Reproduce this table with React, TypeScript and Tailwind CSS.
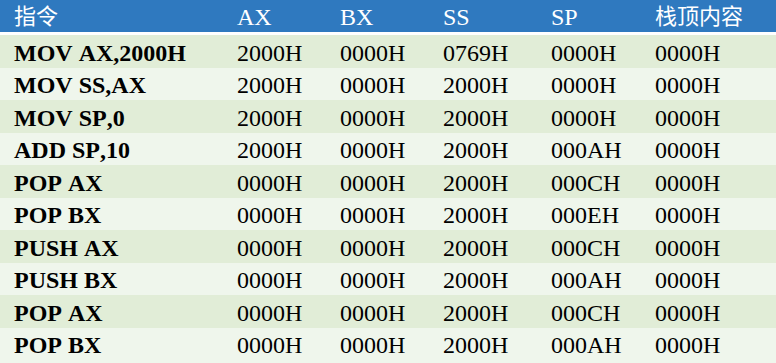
import React from "react";

const rows: string[][] = [
  ["MOV AX,2000H", "2000H", "0000H", "0769H", "0000H", "0000H"],
  ["MOV SS,AX", "2000H", "0000H", "2000H", "0000H", "0000H"],
  ["MOV SP,0", "2000H", "0000H", "2000H", "0000H", "0000H"],
  ["ADD SP,10", "2000H", "0000H", "2000H", "000AH", "0000H"],
  ["POP AX", "0000H", "0000H", "2000H", "000CH", "0000H"],
  ["POP BX", "0000H", "0000H", "2000H", "000EH", "0000H"],
  ["PUSH AX", "0000H", "0000H", "2000H", "000CH", "0000H"],
  ["PUSH BX", "0000H", "0000H", "2000H", "000AH", "0000H"],
  ["POP AX", "0000H", "0000H", "2000H", "000CH", "0000H"],
  ["POP BX", "0000H", "0000H", "2000H", "000AH", "0000H"],
];

const headers = ["指令", "AX", "BX", "SS", "SP", "栈顶内容"];
const widths = ["w-[223px]", "w-[103px]", "w-[103px]", "w-[108px]", "w-[104px]", "w-[135px]"];

export default function App() {
  return (
    <div
      className="w-[776px] h-[363px] overflow-hidden bg-[#eff6ec] text-[24px] leading-none text-black"
      style={{ fontFamily: '"Liberation Serif", "Noto Sans CJK SC", serif', fontKerning: "none" }}
    >
      <div className="flex h-[32px] bg-[#2f79bf] text-white border-b-[3px] border-white box-content">
        {headers.map((h, i) => (
          <div key={i} className={`${widths[i]} shrink-0 pl-[14px] flex items-center pt-[1px]`}>
            <span className={i === 0 || i === 5 ? "text-[22px]" : ""}>{h}</span>
          </div>
        ))}
      </div>
      {rows.map((r, ri) => (
        <div
          key={ri}
          className={`flex h-[32.5px] ${ri % 2 === 0 ? "bg-[#e1edd7]" : "bg-[#eff6ec]"}`}
        >
          {r.map((c, ci) => (
            <div
              key={ci}
              className={`${widths[ci]} shrink-0 pl-[14px] flex items-center pt-[3px] ${ci === 0 ? "font-bold" : ""}`}
            >
              {c}
            </div>
          ))}
        </div>
      ))}
    </div>
  );
}
